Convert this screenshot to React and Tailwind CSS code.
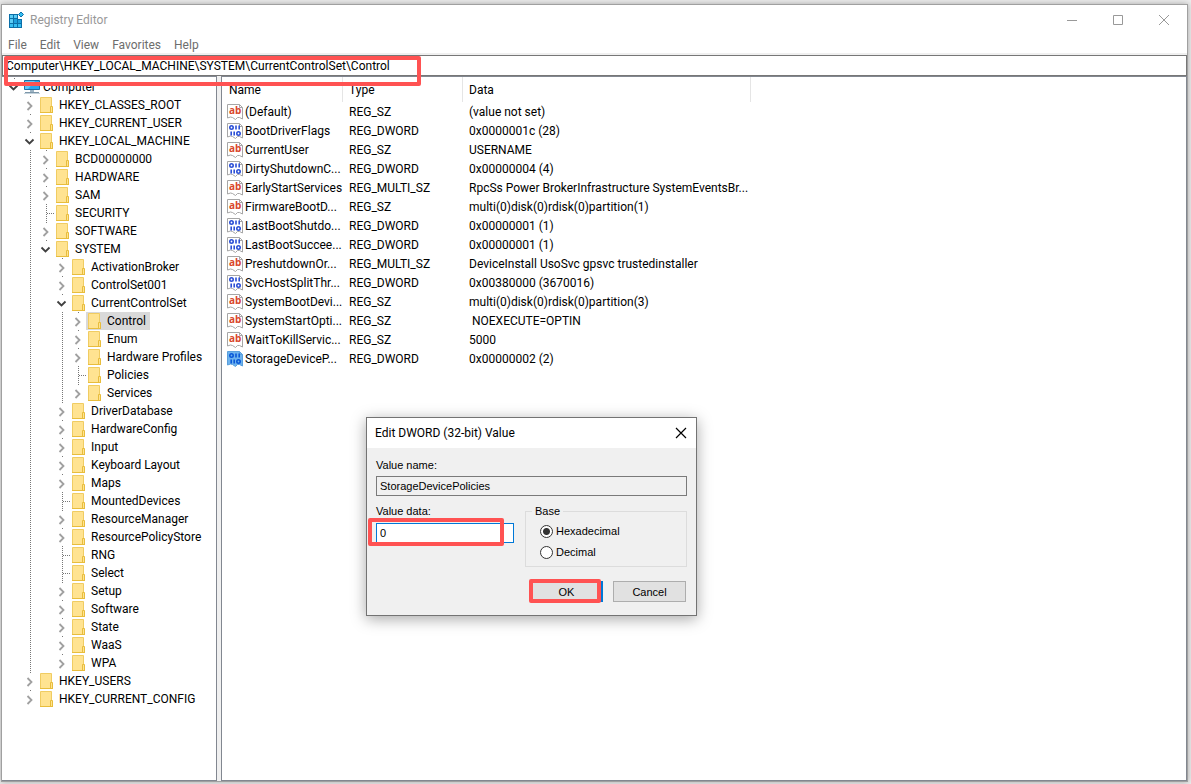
import React from 'react';

const treeItems = [
  { name: 'Computer', level: 0, state: 'open', icon: 'computer' },
  { name: 'HKEY_CLASSES_ROOT', level: 1, state: 'closed' },
  { name: 'HKEY_CURRENT_USER', level: 1, state: 'closed' },
  { name: 'HKEY_LOCAL_MACHINE', level: 1, state: 'open' },
  { name: 'BCD00000000', level: 2, state: 'closed', guides: [1] },
  { name: 'HARDWARE', level: 2, state: 'closed', guides: [1] },
  { name: 'SAM', level: 2, state: 'closed', guides: [1] },
  { name: 'SECURITY', level: 2, state: 'leaf', guides: [1] },
  { name: 'SOFTWARE', level: 2, state: 'closed', guides: [1] },
  { name: 'SYSTEM', level: 2, state: 'open', guides: [1] },
  { name: 'ActivationBroker', level: 3, state: 'closed', guides: [1] },
  { name: 'ControlSet001', level: 3, state: 'closed', guides: [1] },
  { name: 'CurrentControlSet', level: 3, state: 'open', guides: [1] },
  { name: 'Control', level: 4, state: 'closed', guides: [1, 3], selected: true },
  { name: 'Enum', level: 4, state: 'closed', guides: [1, 3] },
  { name: 'Hardware Profiles', level: 4, state: 'closed', guides: [1, 3] },
  { name: 'Policies', level: 4, state: 'leaf', guides: [1, 3] },
  { name: 'Services', level: 4, state: 'closed', guides: [1, 3] },
  { name: 'DriverDatabase', level: 3, state: 'closed', guides: [1] },
  { name: 'HardwareConfig', level: 3, state: 'closed', guides: [1] },
  { name: 'Input', level: 3, state: 'closed', guides: [1] },
  { name: 'Keyboard Layout', level: 3, state: 'closed', guides: [1] },
  { name: 'Maps', level: 3, state: 'closed', guides: [1] },
  { name: 'MountedDevices', level: 3, state: 'leaf', guides: [1] },
  { name: 'ResourceManager', level: 3, state: 'closed', guides: [1] },
  { name: 'ResourcePolicyStore', level: 3, state: 'closed', guides: [1] },
  { name: 'RNG', level: 3, state: 'leaf', guides: [1] },
  { name: 'Select', level: 3, state: 'leaf', guides: [1] },
  { name: 'Setup', level: 3, state: 'closed', guides: [1] },
  { name: 'Software', level: 3, state: 'closed', guides: [1] },
  { name: 'State', level: 3, state: 'closed', guides: [1] },
  { name: 'WaaS', level: 3, state: 'closed', guides: [1] },
  { name: 'WPA', level: 3, state: 'closed', guides: [1] },
  { name: 'HKEY_USERS', level: 1, state: 'closed' },
  { name: 'HKEY_CURRENT_CONFIG', level: 1, state: 'closed' },
];

const values = [
  { name: '(Default)', type: 'REG_SZ', data: '(value not set)' },
  { name: 'BootDriverFlags', type: 'REG_DWORD', data: '0x0000001c (28)' },
  { name: 'CurrentUser', type: 'REG_SZ', data: 'USERNAME' },
  { name: 'DirtyShutdownC...', type: 'REG_DWORD', data: '0x00000004 (4)' },
  { name: 'EarlyStartServices', type: 'REG_MULTI_SZ', data: 'RpcSs Power BrokerInfrastructure SystemEventsBr...' },
  { name: 'FirmwareBootD...', type: 'REG_SZ', data: 'multi(0)disk(0)rdisk(0)partition(1)' },
  { name: 'LastBootShutdo...', type: 'REG_DWORD', data: '0x00000001 (1)' },
  { name: 'LastBootSuccee...', type: 'REG_DWORD', data: '0x00000001 (1)' },
  { name: 'PreshutdownOr...', type: 'REG_MULTI_SZ', data: 'DeviceInstall UsoSvc gpsvc trustedinstaller' },
  { name: 'SvcHostSplitThr...', type: 'REG_DWORD', data: '0x00380000 (3670016)' },
  { name: 'SystemBootDevi...', type: 'REG_SZ', data: 'multi(0)disk(0)rdisk(0)partition(3)' },
  { name: 'SystemStartOpti...', type: 'REG_SZ', data: ' NOEXECUTE=OPTIN' },
  { name: 'WaitToKillServic...', type: 'REG_SZ', data: '5000' },
  { name: 'StorageDeviceP...', type: 'REG_DWORD', data: '0x00000002 (2)', selected: true },
];

const menus = ['File', 'Edit', 'View', 'Favorites', 'Help'];

const AppIcon = () => (
  <svg width="16" height="16" viewBox="0 0 16 16" aria-hidden="true">
    <path d="M1 2h9v5h4v9H1z" fill="#0b6fa8" />
    <path d="M2 3h3v3H2zM6 3h3v3H6zM2 7h3v4H2z" fill="#5ccdf5" />
    <path d="M6 7h3v4H6zM10 8h3v3h-3z" fill="#1e9fdc" />
    <path d="M2 12h3v3H2zM6 12h3v3H6zM10 12h3v3h-3z" fill="#35bdf0" />
    <path d="M13 0l2.500 2.500L13 5l-2.500-2.500z" fill="#35bdf0" stroke="#0b6fa8" />
  </svg>
);

const ComputerIcon = () => (
  <svg width="16" height="16" viewBox="0 0 16 16" aria-hidden="true">
    <path d="M0.500 1.500h15v9h-15z" fill="#2aa7ef" stroke="#1b6ea5" />
    <path d="M1 2h10L4 10H1z" fill="#62c6f8" />
    <path d="M6 11h4v2H6z" fill="#9db4c4" />
    <path d="M1 13h14v1H1z" fill="#7d97a9" />
    <path d="M0 14h16v1H0z" fill="#c3d2dc" />
  </svg>
);

const FolderIcon = () => (
  <svg width="16" height="16" viewBox="0 0 16 16" aria-hidden="true">
    <path d="M0.500 0.500h11v15h-11z" fill="#ffe391" stroke="#f0cc62" />
    <path d="M10.500 9.500h2v6h-2z" fill="#ffe391" stroke="#e8bd3c" />
    <path d="M0 15h13v1H0z" fill="#e8bd3c" />
  </svg>
);

const ValueIcon = ({ binary, selected }) => (
  <svg width="16" height="16" viewBox="0 0 16 16" className="shrink-0 overflow-visible" aria-hidden="true">
    <path
      d="M0.500 0.500h12l3 3v11.500l-3-1.500h-2l-2 2-3-2-2-0.500-3 1z"
      fill={selected ? '#6db3ee' : '#fff'}
      stroke={selected ? '#5a9fdc' : '#a6a6a6'}
    />
    <path d="M12.500 0.500v3h3" fill="none" stroke={selected ? '#5a9fdc' : '#a6a6a6'} />
    {binary ? (
      <g fill="none" stroke={selected ? '#0a58d8' : '#2b4fd6'} strokeWidth="1.600">
        <circle cx="4.500" cy="4.500" r="1.700" />
        <path d="M9 2.500v4M12.200 2.500v4" />
        <path d="M4.200 8.500v4M7.200 8.500v4" />
        <circle cx="11.500" cy="10.500" r="1.700" />
      </g>
    ) : (
      <text x="2" y="10" fontSize="10" fontWeight="700" fill="#d9472b" fontFamily="Open Sans, sans-serif">ab</text>
    )}
  </svg>
);

// dotted connector / expander cell, 16px wide
const TreeLine = ({ kind }) => (
  <svg width="16" height="18" viewBox="0 0 16 18" className="shrink-0" aria-hidden="true">
    {kind === 'guide' && <path d="M8.500 0v18" stroke="#777" strokeDasharray="1 1" />}
    {kind === 'leaf' && <path d="M8.500 0v18M9 9.500h7" stroke="#777" strokeDasharray="1 1" />}
    {kind === 'closed' && (
      <>
        <path d="M8 0h1v1H8z" fill="#777" />
        <path d="M5.500 6l4 4-4 4" fill="none" stroke="#a0a0a0" strokeWidth="1.800" />
      </>
    )}
    {kind === 'open' && (
      <>
        <path d="M8 0h1v1H8z" fill="#777" />
        <path d="M3.500 7.500l4 4 4-4" fill="none" stroke="#404040" strokeWidth="1.800" />
      </>
    )}
  </svg>
);

const TreeRow = ({ item }) => {
  const { name, level, state, icon, guides = [], selected } = item;
  const indents = Array.from({ length: level }, (_, i) => i);
  return (
    <li
      role="treeitem"
      aria-level={level + 1}
      aria-selected={!!selected}
      aria-expanded={state === 'leaf' ? undefined : state === 'open'}
      className="flex h-[18px] items-center"
    >
      {indents.map((i) => (
        <TreeLine key={i} kind={guides.includes(i) ? 'guide' : 'none'} />
      ))}
      <TreeLine kind={state} />
      <span className={`flex h-[18px] items-center pl-0.5 pr-1 ${selected ? 'bg-[#d9d9d9]' : ''}`}>
        {icon === 'computer' ? <ComputerIcon /> : <FolderIcon />}
        <span className="pl-[3px] whitespace-nowrap">{name}</span>
      </span>
    </li>
  );
};

const TitleBar = () => (
  <header className="flex h-[30px] items-center justify-between pl-1.5">
    <div className="flex items-center gap-1.5 text-[#999]">
      <AppIcon />
      <h1>Registry Editor</h1>
    </div>
    <div className="flex text-[#999]">
      <button type="button" aria-label="Minimize" className="flex w-[46px] justify-center">
        <svg width="10" height="10"><path d="M0 5.500h10" stroke="currentColor" /></svg>
      </button>
      <button type="button" aria-label="Maximize" className="flex w-[46px] justify-center">
        <svg width="10" height="10"><path d="M0.500 0.500h9v9h-9z" fill="none" stroke="currentColor" /></svg>
      </button>
      <button type="button" aria-label="Close" className="flex w-[46px] justify-center">
        <svg width="10" height="10"><path d="M0 0l10 10M10 0L0 10" stroke="currentColor" /></svg>
      </button>
    </div>
  </header>
);

const ValuesTable = () => (
  <table className="w-[529px] table-fixed border-separate border-spacing-0 text-left">
    <colgroup>
      <col className="w-[121px]" />
      <col className="w-[120px]" />
      <col className="w-[288px]" />
    </colgroup>
    <thead>
      <tr className="h-[25px]">
        <th className="border-r border-[#e5e5e5] p-0 pl-[7px] font-normal">Name</th>
        <th className="border-r border-[#e5e5e5] p-0 pl-1.5 font-normal">Type</th>
        <th className="border-r border-[#e5e5e5] p-0 pl-1.5 font-normal">Data</th>
      </tr>
    </thead>
    <tbody>
      {values.map((v) => (
        <tr key={v.name} className="h-[19px]">
          <td className="p-0 pl-[5px]">
            <div className="flex items-center gap-0.5 whitespace-nowrap">
              <ValueIcon binary={v.type === 'REG_DWORD'} selected={v.selected} />
              {v.name}
            </div>
          </td>
          <td className="p-0 pl-1.5">{v.type}</td>
          <td className="p-0 pl-1.5 whitespace-pre">{v.data}</td>
        </tr>
      ))}
    </tbody>
  </table>
);

const Highlight = ({ className }) => (
  <div className={`pointer-events-none absolute z-10 rounded-xs border-4 border-[#ff5252] ${className}`} />
);

const EditDialog = () => (
  <section
    role="dialog"
    aria-labelledby="dialog-title"
    className="absolute top-[417px] left-[366px] w-[331px] border border-[#737373] bg-[#f0f0f0] shadow-[0_3px_14px_rgba(0,0,0,0.35)]"
  >
    <div className="flex h-[30px] items-center justify-between bg-white pr-[9px] pl-2">
      <h2 id="dialog-title">Edit DWORD (32-bit) Value</h2>
      <button type="button" aria-label="Close">
        <svg width="12" height="12"><path d="M1 1l10 10M11 1L1 11" stroke="#000" strokeWidth="1.200" /></svg>
      </button>
    </div>
    <form className="px-[9px] pt-2.5 pb-[13px] font-['Liberation_Sans',sans-serif] text-[11px] leading-[14px]">
      <label htmlFor="value-name" className="block">Value name:</label>
      <input
        id="value-name"
        readOnly
        defaultValue="StorageDevicePolicies"
        className="mt-1 block h-5 w-full border border-[#7a7a7a] bg-[#f0f0f0] px-[3px] outline-none"
      />
      <div className="mt-2 flex justify-between">
        <div className="w-[138px]">
          <label htmlFor="value-data" className="block">Value data:</label>
          <div className="relative mt-[5px]">
            <input
              id="value-data"
              defaultValue="0"
              className="block h-5 w-full border border-[#0078d7] bg-white px-[3px] outline-none"
            />
            <Highlight className="-top-[5px] -left-2 h-7 w-[136px]" />
          </div>
        </div>
        <fieldset className="h-[63px] w-[162px] border border-[#dcdcdc] pl-3.5">
          <legend className="-ml-2 px-[3px]">Base</legend>
          <label className="mt-1.5 flex items-center gap-[3px]">
            <input
              type="radio"
              name="base"
              defaultChecked
              className="size-[13px] appearance-none rounded-full border border-[#333] bg-white bg-[radial-gradient(circle,#333_3px,#fff_4px)]"
            />
            Hexadecimal
          </label>
          <label className="mt-[7px] flex items-center gap-[3px]">
            <input type="radio" name="base" className="size-[13px] appearance-none rounded-full border border-[#333] bg-white" />
            Decimal
          </label>
        </fieldset>
      </div>
      <div className="mt-3.5 flex justify-end gap-2.5">
        <div className="relative">
          <button type="button" className="block h-[21px] w-[73px] border-2 border-[#0078d7] bg-[#e1e1e1]">OK</button>
          <Highlight className="-top-0.5 -left-px h-6 w-[72px]" />
        </div>
        <button type="button" className="mr-px block h-[21px] w-[73px] border border-[#adadad] bg-[#e1e1e1]">Cancel</button>
      </div>
    </form>
  </section>
);

const App = () => {
  return (
    <div className="relative flex h-screen bg-[#ececec] pt-1 pr-[3px] pb-0.5 pl-px font-[Roboto,sans-serif] text-xs text-black">
      <main className="flex min-w-0 flex-1 flex-col border border-[#a0a0a0] bg-white shadow-[0_0_6px_rgba(0,0,0,0.3)]">
        <TitleBar />
        <nav className="flex h-[18px] items-end gap-[13px] pl-1.5 text-[#6d6d6d]">
          {menus.map((m) => (
            <button type="button" key={m}>{m}</button>
          ))}
        </nav>
        <div className="relative h-[23px] border-t-2 border-[#f0f0f0]">
          <input
            aria-label="Address"
            defaultValue="Computer\HKEY_LOCAL_MACHINE\SYSTEM\CurrentControlSet\Control"
            className="block h-[21px] w-full border border-[#777] px-[3px] outline-none"
          />
          <Highlight className="top-px left-0.5 h-[30px] w-[417px]" />
        </div>
        <div className="flex min-h-0 flex-1 gap-1 bg-[#f0f0f0]">
          <ul role="tree" aria-label="Registry keys" className="w-[215px] overflow-hidden border border-l-0 border-[#828790] bg-white pt-px pl-1">
            {treeItems.map((item) => (
              <TreeRow key={item.name} item={item} />
            ))}
          </ul>
          <div className="min-w-0 flex-1 overflow-hidden border border-[#828790] bg-white">
            <ValuesTable />
          </div>
        </div>
      </main>
      <EditDialog />
    </div>
  );
};

export default App;
